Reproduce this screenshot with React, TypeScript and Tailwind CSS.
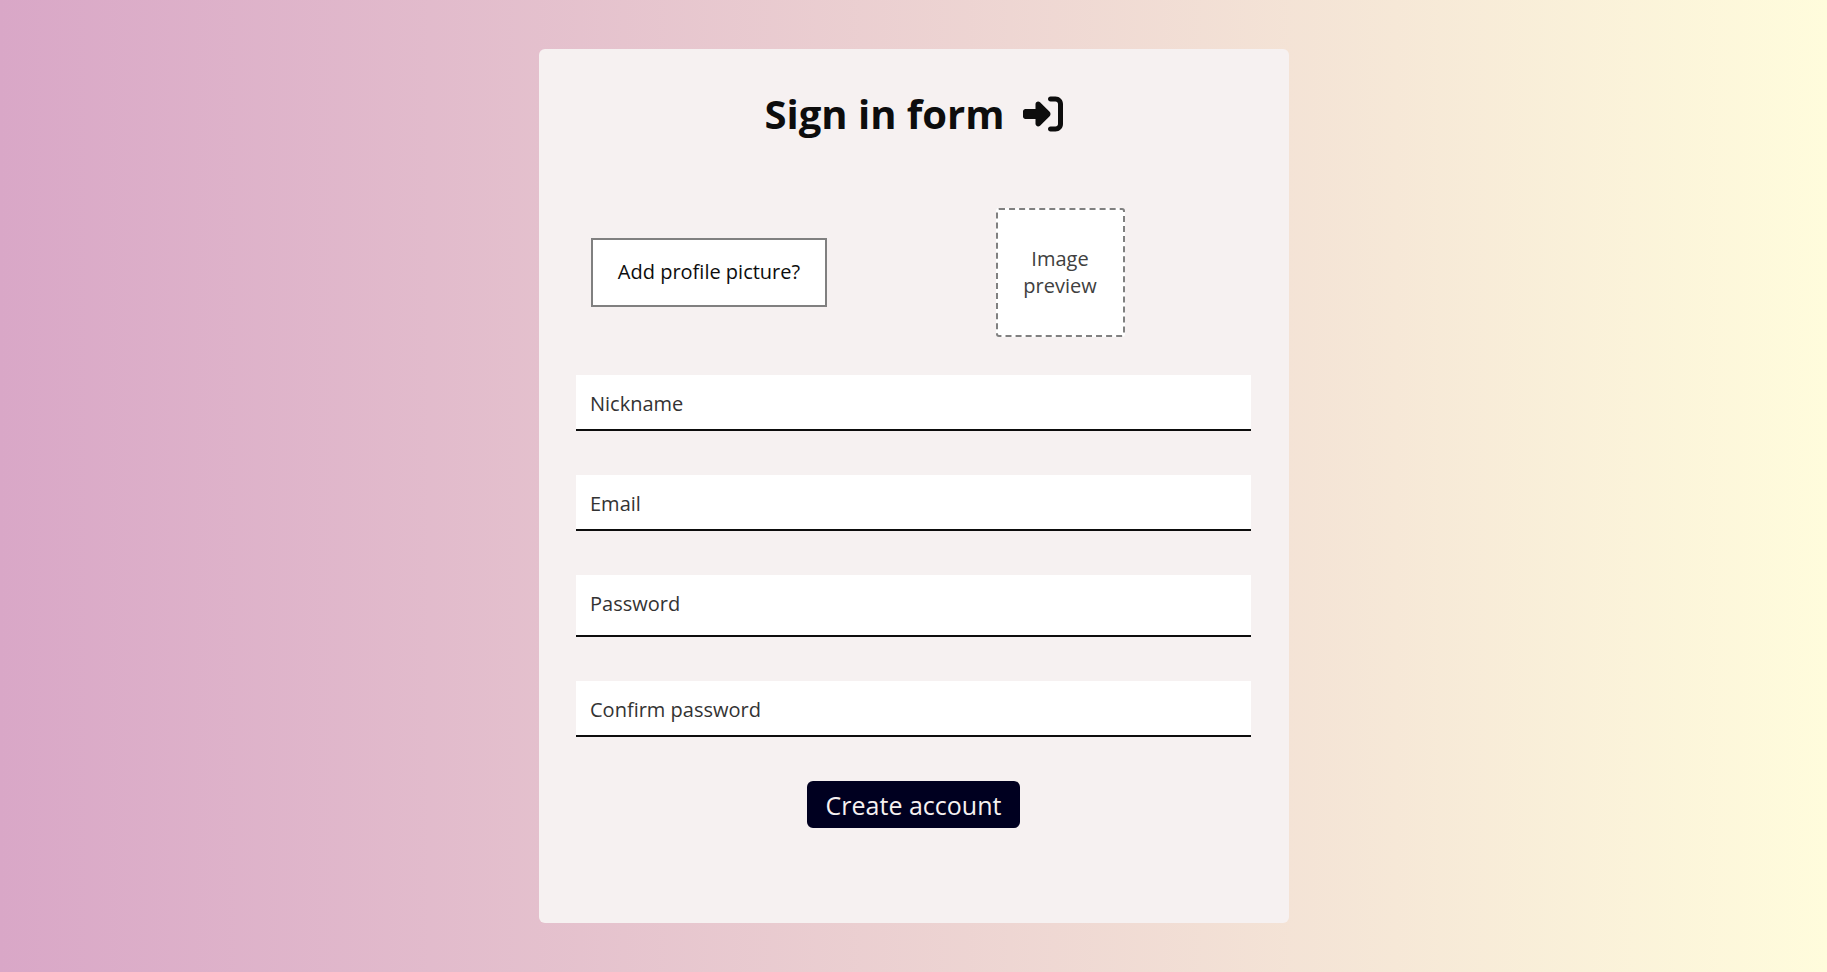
import { FaRightToBracket } from "react-icons/fa6";

type Field = {
  id: string;
  label: string;
  type: string;
  height: string;
};

const fields: Field[] = [
  { id: "nickname", label: "Nickname", type: "text", height: "h-14" },
  { id: "email", label: "Email", type: "email", height: "h-14" },
  { id: "password", label: "Password", type: "password", height: "h-[62px]" },
  { id: "confirm", label: "Confirm password", type: "password", height: "h-14" },
];

export default function App() {
  return (
    <main className="flex min-h-screen items-center justify-center bg-linear-to-r/srgb from-[#d9a7c7] to-[#fffcdc] font-['Open_Sans',sans-serif] text-xl text-[#0d0d0d]">
      <form
        className="flex min-h-[90vh] w-full max-w-[750px] flex-col items-center rounded-md bg-[#f6f1f1] py-[35px]"
        onSubmit={(e) => e.preventDefault()}
      >
        <h1 className="mb-16 flex items-center gap-[18px] text-[40px] leading-[60px] font-bold">
          Sign in form
          <FaRightToBracket aria-hidden="true" />
        </h1>

        <div className="mb-[38px] grid w-9/10 grid-cols-2 items-center">
          <button
            type="button"
            className="ml-[15px] h-[69px] w-[236px] border-2 border-[#808080] bg-white"
          >
            Add profile picture?
          </button>
          <div className="ml-[82px] flex size-[129px] items-center justify-center rounded-[3px] border-2 border-dashed border-[#808080] bg-white p-4 text-center leading-[27px] text-[#404040]">
            Image preview
          </div>
        </div>

        <div className="mb-11 flex w-9/10 flex-col gap-11">
          {fields.map((field) => (
            <div key={field.id} className="relative">
              <input
                id={field.id}
                type={field.type}
                placeholder=" "
                className={`peer block w-full border-b-2 border-[#0d0d0d] bg-white px-3.5 outline-none ${field.height}`}
              />
              <label
                htmlFor={field.id}
                className="pointer-events-none absolute top-3.5 left-3.5 leading-[30px] text-[#333333] peer-focus:-top-7 peer-[:not(:placeholder-shown)]:-top-7"
              >
                {field.label}
              </label>
            </div>
          ))}
        </div>

        <button
          type="submit"
          className="h-[47px] rounded-md bg-[#000020] px-[19px] pt-0.5 text-[25px] leading-9 text-[#f6f1f1]"
        >
          Create account
        </button>
      </form>
    </main>
  );
}
